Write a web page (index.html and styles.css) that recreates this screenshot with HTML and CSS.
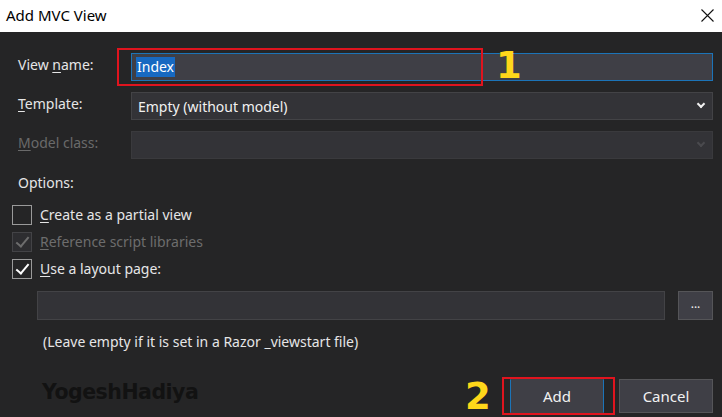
FILE: index.html
```html
<!DOCTYPE html>
<html lang="en">
<head>
  <meta charset="UTF-8">
  <title>Add MVC View</title>
  <link rel="stylesheet" href="styles.css">
</head>
<body>
  <div class="titlebar">
    <span class="title">Add MVC View</span>
    <svg class="close" width="13" height="13" viewBox="0 0 13 13"><path d="M0.5 0.5 L12.5 12.5 M12.5 0.5 L0.5 12.5" stroke="#111" stroke-width="1.1" fill="none"/></svg>
  </div>

  <div class="dialog">
    <div class="field-row">
      <label>View <u>n</u>ame:</label>
      <div class="input focus"><span class="sel">Index</span></div>
    </div>
    <div class="field-row">
      <label><u>T</u>emplate:</label>
      <div class="input combo">Empty (without model)<span class="chev"></span></div>
    </div>
    <div class="field-row disabled">
      <label><u>M</u>odel class:</label>
      <div class="input combo off"><span class="chev dim"></span></div>
    </div>

    <div class="options">
      <div class="opt-title">Options:</div>
      <div class="check-row"><span class="box"></span><span><u>C</u>reate as a partial view</span></div>
      <div class="check-row disabled"><span class="box checked off"></span><span><u>R</u>eference script libraries</span></div>
      <div class="check-row"><span class="box checked"></span><span><u>U</u>se a layout page:</span></div>
    </div>

    <div class="layout-row">
      <div class="input path"></div>
      <div class="btn small">...</div>
    </div>
    <div class="hint">(Leave empty if it is set in a Razor _viewstart file)</div>

    <div class="footer">
      <div class="mark">YogeshHadiya</div>
      <div class="buttons">
        <div class="btn primary">Add</div>
        <div class="btn">Cancel</div>
      </div>
    </div>

    <div class="note note-1"></div>
    <div class="num num-1">1</div>
    <div class="note note-2"></div>
    <div class="num num-2">2</div>
  </div>
</body>
</html>
```

FILE: styles.css
```css
*{
  margin: 0;
  padding: 0;
  box-sizing: border-box;
}
body{
  width: 722px;
  height: 417px;
  overflow: hidden;
  font-family: "Noto Sans", "Open Sans", sans-serif;
  font-size: 14px;
  background: #252526;
}
u{
  text-decoration-thickness: 1px;
  text-underline-offset: 2px;
}
.titlebar{
  height: 32px;
  background: #fff;
  display: flex;
  align-items: center;
  justify-content: space-between;
  padding: 0 8px 2px 6px;
  color: #000;
  font-size: 15px;
}
.dialog{
  position: relative;
  height: 385px;
  padding: 21px 9px 0 18px;
  color: #e6e6e6;
}
.field-row{
  display: grid;
  grid-template-columns: 113px 1fr;
  align-items: center;
  height: 28px;
  margin-bottom: 11px;
}
.field-row label{
  padding-bottom: 5px;
}
.field-row.disabled{
  color: #6a6a6a;
  margin-bottom: 0;
}
.input{
  height: 28px;
  background: #333337;
  border: 1px solid #434346;
  display: flex;
  align-items: center;
  padding-left: 4px;
  color: #f1f1f1;
  position: relative;
}
.input.focus{
  background: #3f3f46;
  border-color: #1c74b8;
}
.sel{
  background: #1769c1;
  color: #fff;
  padding: 0 1px;
  line-height: 20px;
}
.combo{
  padding-left: 6px;
}
.combo.off{
  border-color: #3a3a3d;
}
.chev{
  position: absolute;
  right: 8px;
  top: 8px;
  width: 6px;
  height: 6px;
  border-right: 2px solid #f1f1f1;
  border-bottom: 2px solid #f1f1f1;
  transform: rotate(45deg);
}
.chev.dim{
  border-color: #4a4a4e;
}
.options{
  margin: 14px 0 0 -6px;
}
.opt-title{
  margin-left: 6px;
  height: 24px;
  margin-bottom: 4px;
}
.check-row{
  display: flex;
  align-items: center;
  gap: 8px;
  height: 27px;
}
.check-row.disabled{
  color: #6d6d6d;
}
.box{
  width: 20px;
  height: 20px;
  border: 1px solid #9a9a9a;
  background: #252526;
  position: relative;
}
.box.checked::after{
  content: "";
  position: absolute;
  left: 6px;
  top: 1px;
  width: 5px;
  height: 11px;
  border-right: 2px solid #fff;
  border-bottom: 2px solid #fff;
  transform: rotate(40deg);
}
.box.off{
  border-color: #434346;
  background: #2d2d30;
}
.box.off::after{
  border-color: #6d6d6d;
}
.layout-row{
  display: flex;
  gap: 13px;
  margin: 9px 0 0 19px;
  height: 29px;
}
.input.path{
  flex: 1;
  height: 29px;
}
.btn{
  height: 34px;
  width: 94px;
  background: #3f3f46;
  border: 1px solid #555558;
  display: flex;
  align-items: center;
  justify-content: center;
  color: #f1f1f1;
  font-size: 15px;
}
.btn.small{
  width: 35px;
  height: 29px;
  font-size: 12px;
  padding-bottom: 4px;
}
.hint{
  margin: 12px 0 0 25px;
  color: #e6e6e6;
}
.footer{
  display: flex;
  justify-content: space-between;
  align-items: center;
  margin: 28px 0 0 24px;
}
.mark{
  font-family: "DejaVu Sans", sans-serif;
  font-weight: bold;
  font-size: 20.5px;
  color: #121212;
  letter-spacing: -0.5px;
  margin-top: -8px;
}
.buttons{
  display: flex;
  gap: 15px;
}
.btn.primary{
  border-color: #3f3f46;
  border-left: 1px solid #1c74b8;
  border-right: 1px solid #1c74b8;
}
.note{
  position: absolute;
  border: 2px solid #e0141e;
}
.note-1{
  left: 117px;
  top: 16px;
  width: 366px;
  height: 38px;
}
.note-2{
  left: 502px;
  top: 345px;
  width: 113px;
  height: 38px;
}
.num{
  position: absolute;
  font-family: "DejaVu Sans", sans-serif;
  font-weight: bold;
  color: #ffd71a;
  font-size: 37px;
  line-height: 1;
}
.num-1{
  left: 496px;
  top: 15px;
}
.num-2{
  left: 465px;
  top: 346px;
}
```
